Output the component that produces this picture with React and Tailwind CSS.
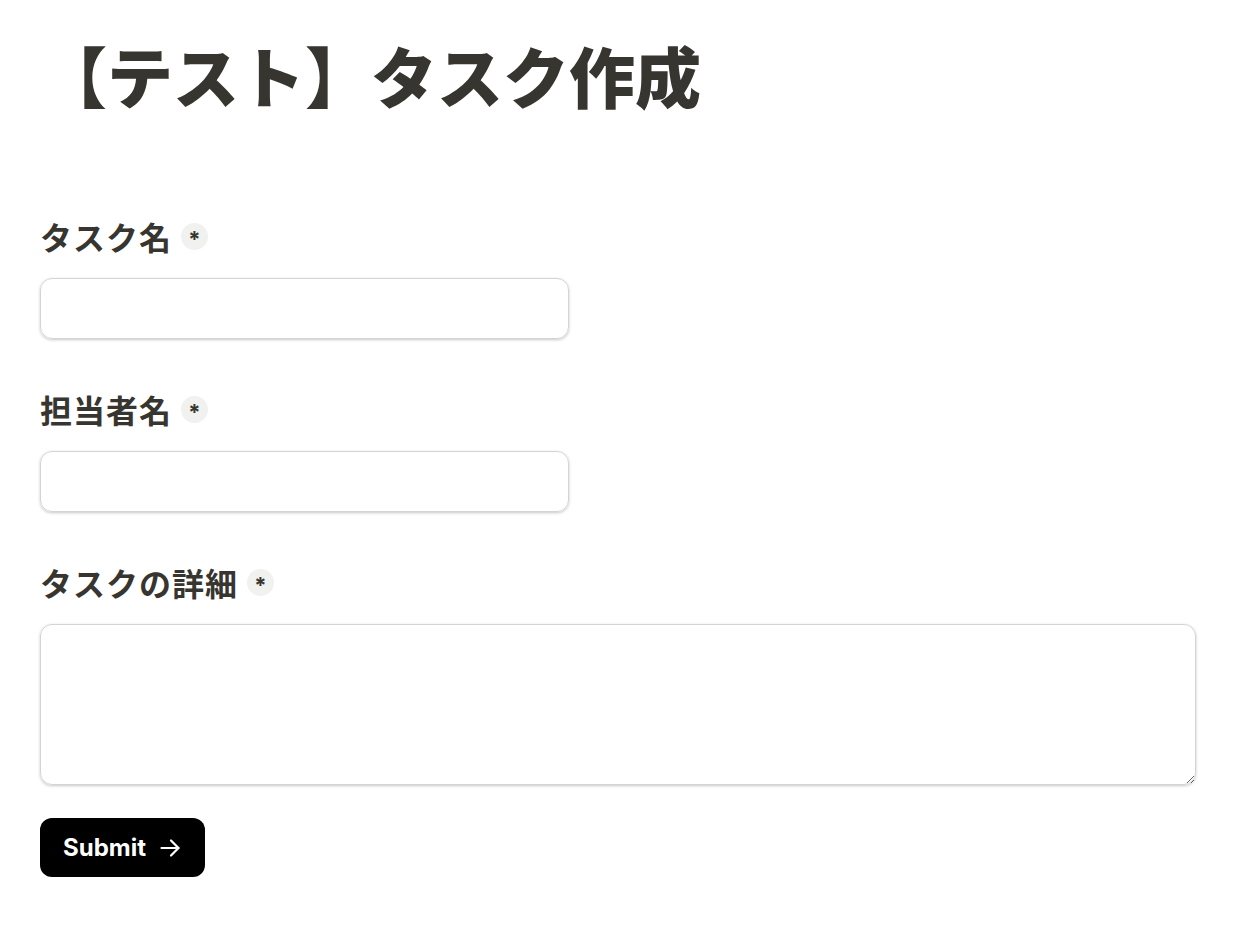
import React from "react";

const font = { fontFamily: '"Noto Sans CJK JP", "Noto Sans", sans-serif' };

function Label({ children }) {
  return (
    <div className="flex items-center gap-[9px] h-[36px]">
      <span className="text-[32px] font-bold text-[#37352f] leading-none tracking-[1px]">{children}</span>
      <span className="w-[27px] h-[27px] rounded-full bg-[#f1f1ef] flex items-center justify-center text-[22px] font-bold text-[#37352f] leading-none pt-[6px]" style={{ fontFamily: 'Inter, "Noto Sans", sans-serif' }}>*</span>
    </div>
  );
}

const field = "w-[529px] h-[61px] rounded-[12px] border border-[#d4d4d4] shadow-[0_1px_3px_rgba(0,0,0,0.22)] outline-none px-3";

export default function App() {
  return (
    <div className="min-h-[934px] bg-white px-[40px]" style={font}>
      <h1 className="pt-[30px] pl-[1px] text-[66px] font-black text-[#37352f] leading-[88px]">【テスト】タスク作成</h1>
      <div className="mt-[100px] flex flex-col">
        <Label>タスク名</Label>
        <input className={"mt-[24px] " + field} />
        <div className="mt-[52px]"><Label>担当者名</Label></div>
        <input className={"mt-[24px] " + field} />
        <div className="mt-[52px]"><Label>タスクの詳細</Label></div>
        <textarea className="mt-[24px] w-[1156px] h-[161px] rounded-[12px] border border-[#d4d4d4] shadow-[0_1px_3px_rgba(0,0,0,0.22)] outline-none px-3" />
        <button className="mt-[33px] w-[165px] h-[59px] rounded-[12px] bg-black text-white flex items-center justify-center gap-[12px]" style={{ fontFamily: 'Inter, "Noto Sans", sans-serif' }}>
          <span className="text-[24px] font-bold">Submit</span>
          <svg width="24" height="24" viewBox="0 0 24 24" fill="none" stroke="white" strokeWidth="2.2" strokeLinecap="round" strokeLinejoin="round">
            <path d="M3.5 12h17" />
            <path d="M13 4.5l7.5 7.5-7.5 7.5" />
          </svg>
        </button>
      </div>
    </div>
  );
}
